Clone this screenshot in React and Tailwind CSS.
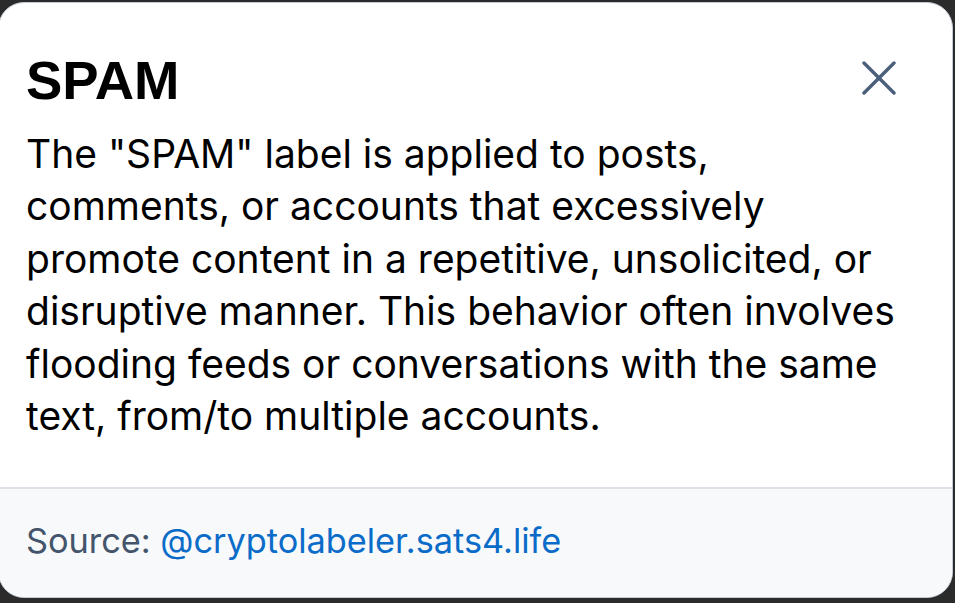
export default function App() {
  return (
    <div className="h-[603px] w-[955px] overflow-hidden bg-[#2b2b2b] pt-[2px]">
      <div className="-ml-[2px] flex h-[596px] w-[955px] flex-col overflow-hidden rounded-[26px] border border-[#c3cad3] bg-white">
        <div className="flex-1 pl-[27px] pr-[54px] pt-[48px]">
          <div className="flex items-start justify-between">
            <h1 className="text-[54.5px] font-bold leading-[60px] text-black [font-family:'Liberation_Sans',Arial,sans-serif]">
              SPAM
            </h1>
            <button type="button" className="mr-[2px] mt-[10px] text-[#4a5f7a]" aria-label="Close">
              <svg width="34" height="34" viewBox="0 0 34 34" fill="none" stroke="currentColor" strokeWidth="3.4" strokeLinecap="round">
                <path d="M2 2 32 32" />
                <path d="M32 2 2 32" />
              </svg>
            </button>
          </div>
          <p className="mt-[17px] text-[39px] leading-[52.4px] text-black [font-family:Inter,'Noto_Sans',sans-serif]">
            The "SPAM" label is applied to posts, comments, or accounts that excessively promote content in a repetitive, unsolicited, or disruptive manner. This behavior often involves flooding feeds or conversations with the same text, from/to multiple accounts.
          </p>
        </div>
        <div className="h-[110px] border-t-2 border-[#dde2e8] bg-[#f7f9fb] pl-[27px] pt-[30px] text-[34.3px] leading-[44px] [font-family:Inter,'Noto_Sans',sans-serif]">
          <span className="text-[#44546a]">Source: </span>
          <a href="#" className="text-[#0a6cc8]">@cryptolabeler.sats4.life</a>
        </div>
      </div>
    </div>
  )
}
